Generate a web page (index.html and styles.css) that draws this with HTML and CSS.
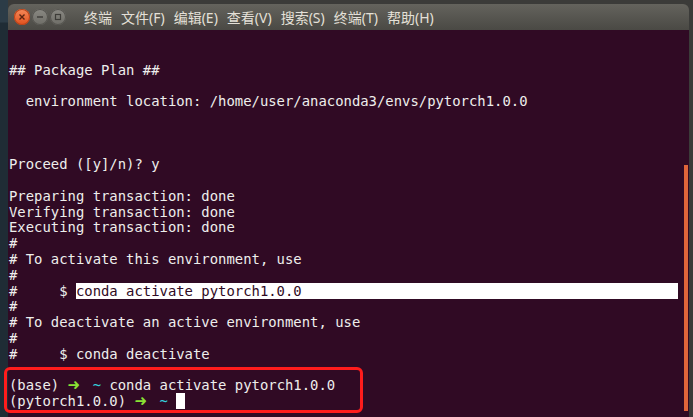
FILE: index.html
```html
<!DOCTYPE html>
<html lang="zh-CN">
<head>
    <meta charset="UTF-8">
    <title>终端</title>
    <link rel="stylesheet" href="styles.css">
</head>
<body>
    <div class="desktop">
        <div class="side"></div>
        <div class="window">
            <div class="titlebar">
                <div class="buttons">
                    <span class="btn close">
                        <svg width="8" height="8" viewBox="0 0 8 8"><path d="M1.5 1.5 L6.5 6.5 M6.5 1.5 L1.5 6.5" stroke="#5a2410" stroke-width="1.4"/></svg>
                    </span>
                    <span class="btn">
                        <svg width="8" height="8" viewBox="0 0 8 8"><path d="M1 4 H7" stroke="#3d3c38" stroke-width="1.4"/></svg>
                    </span>
                    <span class="btn">
                        <svg width="8" height="8" viewBox="0 0 8 8"><rect x="1.5" y="1.5" width="5" height="5" fill="none" stroke="#3d3c38" stroke-width="1.2"/></svg>
                    </span>
                </div>
                <ul class="menu">
                    <li>终端</li>
                    <li>文件(F)</li>
                    <li>编辑(E)</li>
                    <li>查看(V)</li>
                    <li>搜索(S)</li>
                    <li>终端(T)</li>
                    <li>帮助(H)</li>
                </ul>
            </div>
            <div class="terminal">
<pre class="screen">


## Package Plan ##

  environment location: /home/user/anaconda3/envs/pytorch1.0.0



Proceed ([y]/n)? y

Preparing transaction: done
Verifying transaction: done
Executing transaction: done
#
# To activate this environment, use
#
#     $ <span class="sel">conda activate pytorch1.0.0                                             </span>
#
# To deactivate an active environment, use
#
#     $ conda deactivate

(base) <span class="arrow">➜</span>  <span class="dir">~</span> conda activate pytorch1.0.0
(pytorch1.0.0) <span class="arrow">➜</span>  <span class="dir">~</span> <span class="cursor"> </span></pre>
                <div class="scrollbar"><div class="thumb"></div></div>
            </div>
        </div>
        <div class="highlight"></div>
    </div>
</body>
</html>
```

FILE: styles.css
```css
body {
    margin: 0;
    padding: 0;
    background-color: #3a3a38;
    width: 693px;
    height: 417px;
    overflow: hidden;
}

.desktop {
    position: relative;
    display: flex;
    height: 417px;
    background-color: #3b3b39;
}

.side {
    width: 8px;
    background: linear-gradient(to bottom, #2c3c47 0, #2c3c47 22px, #1f2c35 23px, #1f2c35 100%);
}

.window {
    margin-top: 4px;
    width: 681px;
    display: flex;
    flex-direction: column;
}

.titlebar {
    height: 26px;
    display: flex;
    align-items: center;
    border-radius: 6px 6px 0 0;
    background: linear-gradient(to bottom, #64635d, #4a4944);
}

.buttons {
    display: flex;
    gap: 2px;
    padding-left: 6px;
}

.btn {
    width: 16px;
    height: 16px;
    border-radius: 50%;
    display: flex;
    align-items: center;
    justify-content: center;
    background: linear-gradient(to bottom, #8a8983, #6e6d67);
    box-shadow: inset 0 0 0 1px #55544f;
}

.btn.close {
    background: linear-gradient(to bottom, #f58a5a, #e0501d);
    box-shadow: inset 0 0 0 1px #b8431a;
}

.menu {
    list-style: none;
    margin: 0;
    padding: 0 0 0 18px;
    display: flex;
    gap: 9px;
    font-family: "Noto Sans", "Noto Sans CJK SC", sans-serif;
    font-size: 14px;
    color: #e4e0d8;
}

.terminal {
    flex: 1;
    height: 381px;
    display: flex;
    background-color: #300a24;
}

.screen {
    flex: 1;
    margin: 0;
    padding: 1px 0 0 1px;
    font-family: "DejaVu Sans Mono", monospace;
    font-size: 13.9px;
    line-height: 15.78px;
    color: #eeeeec;
    white-space: pre;
    overflow: hidden;
}

.sel {
    background-color: #ffffff;
    color: #300a24;
}

.arrow {
    display: inline-block;
    width: 8.37px;
    font-family: "DejaVu Sans", sans-serif;
    font-size: 15px;
    line-height: 14px;
    color: #8ae234;
    font-weight: bold;
}

.dir {
    color: #34d0dc;
}

.cursor {
    background-color: #ffffff;
}

.scrollbar {
    width: 4px;
    margin-right: 1px;
}

.thumb {
    margin-top: 135px;
    height: 246px;
    background-color: #e0653a;
}

.highlight {
    position: absolute;
    left: 4px;
    top: 367px;
    width: 353px;
    height: 40px;
    border: 3px solid #ff1c1c;
    border-radius: 6px;
}
```
